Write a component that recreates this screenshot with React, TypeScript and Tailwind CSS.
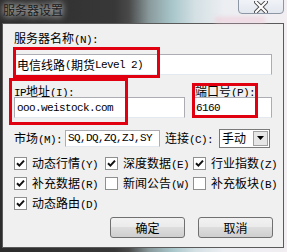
import React from "react";

const CJK = /[\u3000-\u9fff\uff00-\uffef]/;

function T({ s }: { s: string }) {
  const runs: { t: string; c: boolean }[] = [];
  for (const ch of s) {
    const c = CJK.test(ch);
    const last = runs[runs.length - 1];
    if (last && last.c === c) last.t += ch;
    else runs.push({ t: ch, c });
  }
  return (
    <>
      {runs.map((r, i) =>
        r.c ? (
          <span key={i} className="font-['Noto_Sans_CJK_SC',sans-serif] text-[12px]">
            {r.t}
          </span>
        ) : (
          <span
            key={i}
            className="font-['Liberation_Mono','Noto_Sans_CJK_SC',monospace] text-[11px] tracking-[-0.6px] whitespace-pre"
          >
            {r.t}
          </span>
        )
      )}
    </>
  );
}

function Check({ checked, label }: { checked: boolean; label: string }) {
  return (
    <div className="flex items-center h-[14px] gap-[5px]">
      <div className="w-[13px] h-[13px] border border-[#8e8f8f] bg-white flex items-center justify-center shrink-0">
        {checked && (
          <svg width="9" height="9" viewBox="0 0 9 9">
            <path d="M1 4.2 L3.4 6.6 L8 1.6" stroke="#111" strokeWidth="2" fill="none" />
          </svg>
        )}
      </div>
      <div className="h-[14px] leading-[14px] whitespace-nowrap text-black">
        <T s={label} />
      </div>
    </div>
  );
}

function Btn({ label }: { label: string }) {
  return (
    <div className="w-[75px] h-[21px] rounded-[3px] border border-[#707070] bg-[linear-gradient(#f2f2f2_0%,#ebebeb_45%,#dddddd_50%,#cfcfcf_100%)] flex items-center justify-center text-black leading-[14px]">
      <T s={label} />
    </div>
  );
}

export default function App() {
  return (
    <div className="relative w-[287px] h-[252px] overflow-hidden font-['Noto_Sans_CJK_SC',sans-serif] text-[12px] bg-[linear-gradient(90deg,#2c2c2c_0%,#383838_40%,#4a4a4a_45%,#8a9a9c_52%,#a8c6ca_60%,#d4e0e4_68%,#eceef2_78%,#f2eef2_100%)]">
      {/* title bar */}
      <div className="h-[23px] relative">
        <div className="absolute left-[3px] top-[2px] leading-[16px] text-[#1c1c1c] text-[12px] [text-shadow:0_0_6px_rgba(255,255,255,0.85),0_0_10px_rgba(255,255,255,0.6)]">
          服务器设置
        </div>
        <div className="absolute left-[215px] top-[17px] w-[50px] h-[6px] bg-[#f0c8d4] opacity-60 blur-[2px]" />
        <div className="absolute left-[238px] top-[-4px] w-[46px] h-[18px] rounded-b-[4px] border border-[#8c96a4] bg-[linear-gradient(#f4f6fa,#e2e6ee)] flex items-center justify-center">
          <svg width="14" height="12" viewBox="0 0 14 12" className="mt-[4px]">
            <path d="M2 1 L12 11 M12 1 L2 11" stroke="#4a4a4a" strokeWidth="4" strokeLinecap="round" />
            <path d="M2 1 L12 11 M12 1 L2 11" stroke="#ffffff" strokeWidth="2.2" strokeLinecap="round" />
          </svg>
        </div>
      </div>
      {/* client area */}
      <div className="ml-[2px] w-[282px] h-[225px] bg-[#f0f0f0] border border-[#5a5a5a] flex flex-col pl-[11px] pr-[10px] text-black">
        <div className="mt-[7px] h-[14px] leading-[14px]">
          <T s="服务器名称(N):" />
        </div>
        <div className="mt-[9px] w-[258px] h-[21px] bg-white border border-[#abadb3] border-b-[#e3e9ef] flex items-center pl-[2px] leading-[14px]">
          <T s="电信线路(期货Level 2)" />
        </div>
        <div className="mt-[9px] flex gap-[8px]">
          <div className="flex flex-col w-[171px]">
            <div className="h-[13px] leading-[13px]">
              <T s="IP地址(I):" />
            </div>
            <div className="w-[171px] h-[21px] bg-white border border-[#abadb3] border-b-[#e3e9ef] flex items-center pl-[2px] leading-[14px]">
              <T s="ooo.weistock.com" />
            </div>
          </div>
          <div className="flex flex-col w-[79px]">
            <div className="h-[13px] leading-[13px] ml-[2px]">
              <T s="端口号(P):" />
            </div>
            <div className="w-[79px] h-[21px] bg-white border border-[#abadb3] border-b-[#e3e9ef] flex items-center pl-[2px] leading-[14px]">
              <T s="6160" />
            </div>
          </div>
        </div>
        <div className="mt-[10px] h-[20px] flex items-center">
          <div className="h-[14px] leading-[14px] whitespace-nowrap">
            <T s="市场(M):" />
          </div>
          <div className="ml-[3px] w-[95px] h-[17px] bg-white border border-[#abadb3] border-b-[#e3e9ef] overflow-hidden flex items-center pl-[2px] leading-[14px] whitespace-nowrap">
            <T s="SQ,DQ,ZQ,ZJ,SY" />
          </div>
          <div className="ml-[5px] h-[14px] leading-[14px] whitespace-nowrap">
            <T s="连接(C):" />
          </div>
          <div className="ml-[6px] w-[51px] h-[19px] bg-white border border-[#7a7a7a] flex items-center justify-between pl-[2px] pr-[1px]">
            <span className="h-[14px] leading-[14px]">
              <T s="手动" />
            </span>
            <div className="w-[15px] h-[15px] bg-[#e6e6e6] border border-[#a0a0a0] flex items-center justify-center">
              <svg width="7" height="4" viewBox="0 0 7 4">
                <path d="M0 0 L7 0 L3.5 4 Z" fill="#000" />
              </svg>
            </div>
          </div>
        </div>
        <div className="mt-[8px] grid grid-cols-[91px_88px_1fr] gap-y-[6px]">
          <Check checked label="动态行情(Y)" />
          <Check checked label="深度数据(E)" />
          <Check checked label="行业指数(Z)" />
          <Check checked label="补充数据(R)" />
          <Check checked={false} label="新闻公告(W)" />
          <Check checked={false} label="补充板块(B)" />
          <Check checked label="动态路由(D)" />
        </div>
        <div className="mt-[7px] flex justify-end gap-[13px]">
          <Btn label="确定" />
          <Btn label="取消" />
        </div>
      </div>
      {/* annotation boxes */}
      <div className="absolute left-[13px] top-[47px] w-[147px] h-[31px] border-[3px] border-[#e0000f]" />
      <div className="absolute left-[9px] top-[78px] w-[119px] h-[47px] border-[3px] border-[#e0000f]" />
      <div className="absolute left-[192px] top-[83px] w-[66px] h-[35px] border-[3px] border-[#e0000f]" />
    </div>
  );
}
